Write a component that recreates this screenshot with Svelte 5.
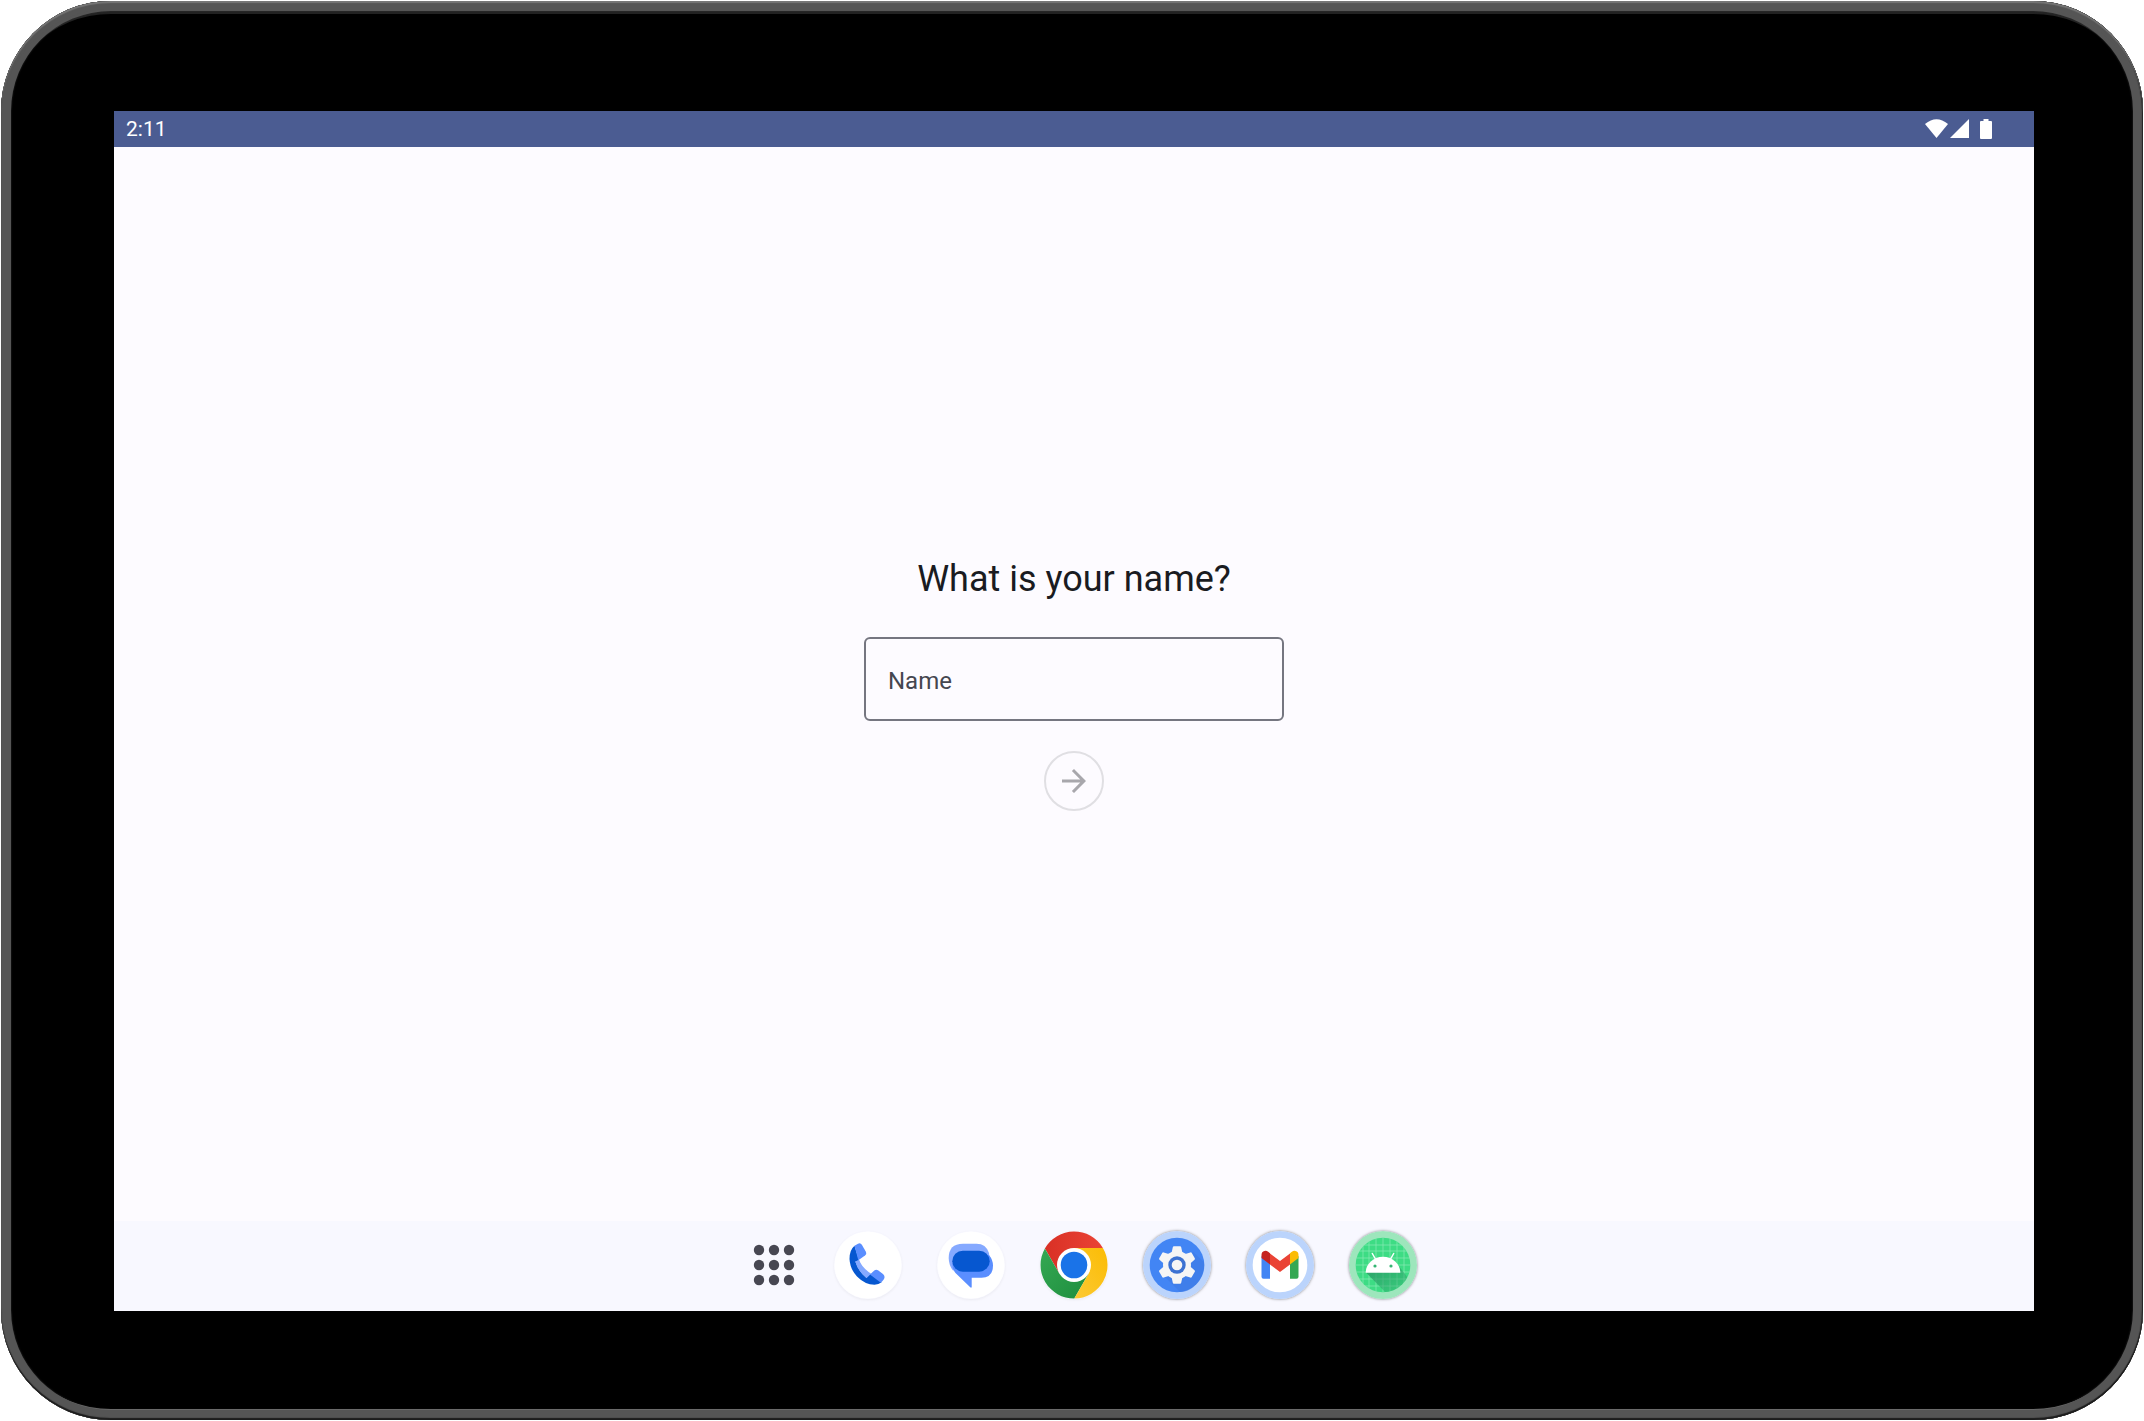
<script lang="ts">
  let name = $state('');
  const teeth = [0, 60, 120, 180, 240, 300];
  const gridLines = [14, 20, 27, 34, 41, 48, 55];
  const dots = [9, 24, 39];
</script>

<div class="device">
  <div class="screen">
    <header class="status">
      <time>2:11</time>
      <div class="signals">
        <svg class="wifi" viewBox="0 0 23 20" aria-label="Wi-Fi"><path d="M0 5Q11.500-4.500 23 5L11.500 19z" /></svg>
        <svg class="cell" viewBox="0 0 19 20" aria-label="Signal"><path d="M19 0V19H0z" /></svg>
        <svg class="battery" viewBox="0 0 12 20" aria-label="Battery"><path d="M3.500 0h5v2H11a1 1 0 0 1 1 1v16a1 1 0 0 1-1 1H1a1 1 0 0 1-1-1V3a1 1 0 0 1 1-1h2.500z" /></svg>
      </div>
    </header>

    <main>
      <form onsubmit={(e) => e.preventDefault()}>
        <h1><label for="name">What is your name?</label></h1>
        <input id="name" type="text" placeholder="Name" bind:value={name} />
        <button class="next" class:ready={name.length > 0} disabled={!name} aria-label="Next">
          <svg viewBox="0 0 24 24"><path d="M12 4l-1.410 1.410L16.170 11H4v2h12.170l-5.580 5.590L12 20l8-8z" /></svg>
        </button>
      </form>
    </main>

    <nav class="taskbar" aria-label="Apps">
      <button class="all" aria-label="All apps">
        <svg viewBox="0 0 48 48">
          {#each dots as y}
            {#each dots as x}
              <circle cx={x} cy={y} r="5.200" fill="#474752" />
            {/each}
          {/each}
        </svg>
      </button>

      <button class="app soft" aria-label="Phone">
        <svg viewBox="0 0 68 68">
          <circle cx="34" cy="34" r="33.500" fill="#fff" />
          <path fill="#85a9ff" d="M21 30L25 28.500Q27.500 36.500 37.500 43L33 47.500Q24 40 21 30z" />
          <path fill="#0657d0" d="M20.500 14.800Q15.500 19 15.500 28Q16 38 23 45.500Q31 53.700 40.500 53.700Q44.500 53.700 48 51L36.500 43.300L32.500 47Q24 40 21.300 30.500L25 29z" />
          <path fill="#5a8eff" d="M20.500 14.800L24 12.700Q26.500 11.500 28 14L32 21Q33 23 31 24.500L24.300 29.200z" />
          <path fill="#5a8eff" d="M36 43.500L40.300 39.500Q42 38 44 39.200L49 43Q51.700 45.500 49.700 48.500Q48.500 50.500 46.500 51.600z" />
          <path fill="#85a9ff" d="M21.300 30.500L24.700 29.200Q27.500 37 35.500 43.700L32.500 47Q24 40 21.300 30.500z" />
        </svg>
      </button>

      <button class="app soft" aria-label="Messages">
        <svg viewBox="0 0 68 68">
          <circle cx="34" cy="34" r="33.500" fill="#fff" />
          <path fill="#85a9ff" d="M26 12.700H39.500Q49 12.700 52 22Q54 31 46 38L16 39.500Q11.700 34 11.700 27Q11.700 12.700 26 12.700z" />
          <path fill="#5a8eff" d="M26 24H52Q56 29 56 34.500Q56 46.700 44.500 46.700H34.700V56.500H33.500L18.500 42Q15.300 38.500 15.300 32z" />
          <rect x="15.300" y="19.700" width="37.400" height="21" rx="10.500" fill="#0657d0" />
        </svg>
      </button>

      <button class="app soft" aria-label="Chrome">
        <svg viewBox="0 0 68 68">
          <defs>
            <linearGradient id="red" x1="0" y1="0" x2="1" y2="0"><stop offset="0" stop-color="#d93025" /><stop offset="1" stop-color="#ea4335" /></linearGradient>
            <linearGradient id="green" x1="0" y1="0" x2="1" y2="1"><stop offset="0" stop-color="#34a853" /><stop offset="1" stop-color="#1e8e3e" /></linearGradient>
            <linearGradient id="yellow" x1="1" y1="0" x2="0" y2="1"><stop offset="0" stop-color="#fbbc04" /><stop offset="1" stop-color="#fcc934" /></linearGradient>
          </defs>
          <path fill="url(#red)" d="M34 34V17H62.900A33.500 33.500 0 0 0 4.900 17.500L19.300 42.500z" />
          <path fill="url(#green)" d="M34 34L19.300 42.500L4.900 17.500A33.500 33.500 0 0 0 34.300 67.500L48.700 42.500z" />
          <path fill="url(#yellow)" d="M34 34L48.700 42.500L34.300 67.500A33.500 33.500 0 0 0 62.900 17H34z" />
          <circle cx="34" cy="34" r="17" fill="#fff" />
          <circle cx="34" cy="34" r="13.300" fill="#1a73e8" />
        </svg>
      </button>

      <button class="app ring" aria-label="Settings">
        <svg viewBox="0 0 68 68">
          <circle cx="34" cy="34" r="34" fill="#bbd4fc" />
          <circle cx="34" cy="34" r="27.300" fill="#4285f4" />
          <path fill="#3b78e0" d="M50 21L61 31Q62 42 55 51.500Q47 61 37 61L22 46z" fill-opacity="0.500" />
          {#each teeth as angle}
            <path fill="#f5f5f5" transform={`rotate(${angle} 34 34)`} d="M31 15.200h6q1 0 1.200 1l1.300 6h-11l1.300-6q.2-1 1.200-1z" />
          {/each}
          <circle cx="34" cy="34" r="14" fill="#f5f5f5" />
          <circle cx="34" cy="34" r="8.700" fill="#3c72d2" />
          <circle cx="34" cy="34" r="5.300" fill="#f5f5f5" />
        </svg>
      </button>

      <button class="app ring" aria-label="Gmail">
        <svg viewBox="0 0 68 68">
          <circle cx="34" cy="34" r="34" fill="#bbd4fc" />
          <circle cx="34" cy="34" r="27.300" fill="#fff" />
          <path fill="#4285f4" d="M15.500 25L24 32V47.700H17.500Q15.500 47.700 15.500 45.700z" />
          <path fill="#34a853" d="M52.500 25L44 32V47.700H50.500Q52.500 47.700 52.500 45.700z" />
          <path fill="#ea4335" d="M24 22.500L34 30L44 22.500V33.500L34 41L24 33.500z" />
          <path fill="#c5221f" d="M15.500 27V24Q15.500 20.500 18.500 19.900Q20.500 19.500 22.500 21L24 22.300V33.500z" />
          <path fill="#fbbc04" d="M52.500 27V24Q52.500 20.500 49.500 19.900Q47.500 19.500 45.500 21L44 22.300V33.500z" />
        </svg>
      </button>

      <button class="app ring" aria-label="Android app">
        <svg viewBox="0 0 68 68">
          <defs>
            <clipPath id="disc"><circle cx="34" cy="34" r="27.300" /></clipPath>
            <linearGradient id="shade" x1="0" y1="0" x2="1" y2="1"><stop offset="0.200" stop-color="#2a9d66" stop-opacity="0.800" /><stop offset="0.900" stop-color="#2a9d66" stop-opacity="0.150" /></linearGradient>
          </defs>
          <circle cx="34" cy="34" r="34" fill="#9de6bc" />
          <g clip-path="url(#disc)">
            <rect width="68" height="68" fill="#3ddc84" />
            {#each gridLines as p}
              <path stroke="#8aebb5" stroke-width="0.700" d={`M${p} 0V68M0 ${p}H68`} />
            {/each}
            <path fill="url(#shade)" d="M17 41.500L40 65L66 56L49 34z" />
          </g>
          <path fill="#fff" d="M16.700 41.700A17.300 16 0 0 1 51.300 41.700z" />
          <path stroke="#fff" stroke-width="1.500" stroke-linecap="round" d="M23.300 22.500L27 29M44.700 22.500L41 29" />
          <circle cx="26" cy="35" r="1.600" fill="#35b573" />
          <circle cx="42" cy="35" r="1.600" fill="#35b573" />
        </svg>
      </button>
    </nav>
  </div>
</div>

<style>
  :global(body) {
    background: #fff;
    font-family: Roboto, sans-serif;
  }
  .device {
    box-sizing: border-box;
    display: flex;
    min-height: calc(100vh - 2px);
    margin: 1px;
    padding: 110px 109px 109px 113px;
    border-radius: 110px;
    background: #000;
    box-shadow:
      inset 0 2px 1px #777,
      inset 0 -2px 1px #1c1c1c,
      inset -1px 0 1px #1c1c1c,
      inset 0 8px 0 #555,
      inset 0 0 0 10px #555,
      inset 0 -11px 0 #6a6a6a,
      inset 0 0 2px 10px #333,
      inset 0 13px 0 #222;
  }
  .screen {
    flex: 1;
    display: flex;
    flex-direction: column;
    background: #fdfbff;
  }
  .status {
    display: flex;
    align-items: center;
    justify-content: space-between;
    height: 36px;
    padding: 0 42px 0 12px;
    background: #4b5c92;
    color: #fff;
    font-size: 21px;
    line-height: 36px;
  }
  .signals {
    display: flex;
    align-items: center;
    fill: #fff;
  }
  .signals svg {
    height: 20px;
  }
  .wifi {
    width: 23px;
    margin-right: 2px;
  }
  .cell {
    width: 19px;
    margin-right: 11px;
  }
  .battery {
    width: 12px;
  }
  main {
    flex: 1;
    display: flex;
    align-items: center;
    justify-content: center;
    padding-bottom: 2px;
  }
  form {
    display: flex;
    flex-direction: column;
    align-items: center;
    width: 420px;
  }
  h1 {
    margin: 0 0 34px;
    color: #1a1b21;
    font-size: 36px;
    font-weight: 400;
    line-height: 48px;
  }
  input {
    box-sizing: border-box;
    width: 100%;
    height: 84px;
    margin-bottom: 30px;
    padding: 4px 22px 0;
    border: 2px solid #757680;
    border-radius: 6px;
    background: transparent;
    color: #1a1b21;
    font: 24px/36px Roboto, sans-serif;
  }
  input::placeholder {
    color: #45464f;
    opacity: 1;
  }
  button {
    display: flex;
    align-items: center;
    justify-content: center;
    padding: 0;
    border: 0;
    border-radius: 50%;
    background: none;
  }
  .next {
    box-sizing: border-box;
    width: 60px;
    height: 60px;
    border: 2px solid #e0dfe3;
    fill: #a8a7ac;
  }
  .next.ready {
    border-color: #757680;
    fill: #1a1b21;
  }
  .next svg {
    flex: none;
    width: 36px;
    height: 36px;
  }
  .taskbar {
    box-sizing: border-box;
    display: flex;
    align-items: center;
    justify-content: center;
    gap: 35px;
    height: 90px;
    padding: 0 0 2px 17px;
    background: #f8f8ff;
  }
  .all {
    width: 51px;
    height: 51px;
  }
  .all svg {
    width: 48px;
    height: 48px;
  }
  .app,
  .app svg {
    width: 68px;
    height: 68px;
  }
  .soft {
    box-shadow: 0 1px 3px #0000000f;
  }
  .ring {
    box-shadow: 0 0 3px #00000080;
  }
</style>
